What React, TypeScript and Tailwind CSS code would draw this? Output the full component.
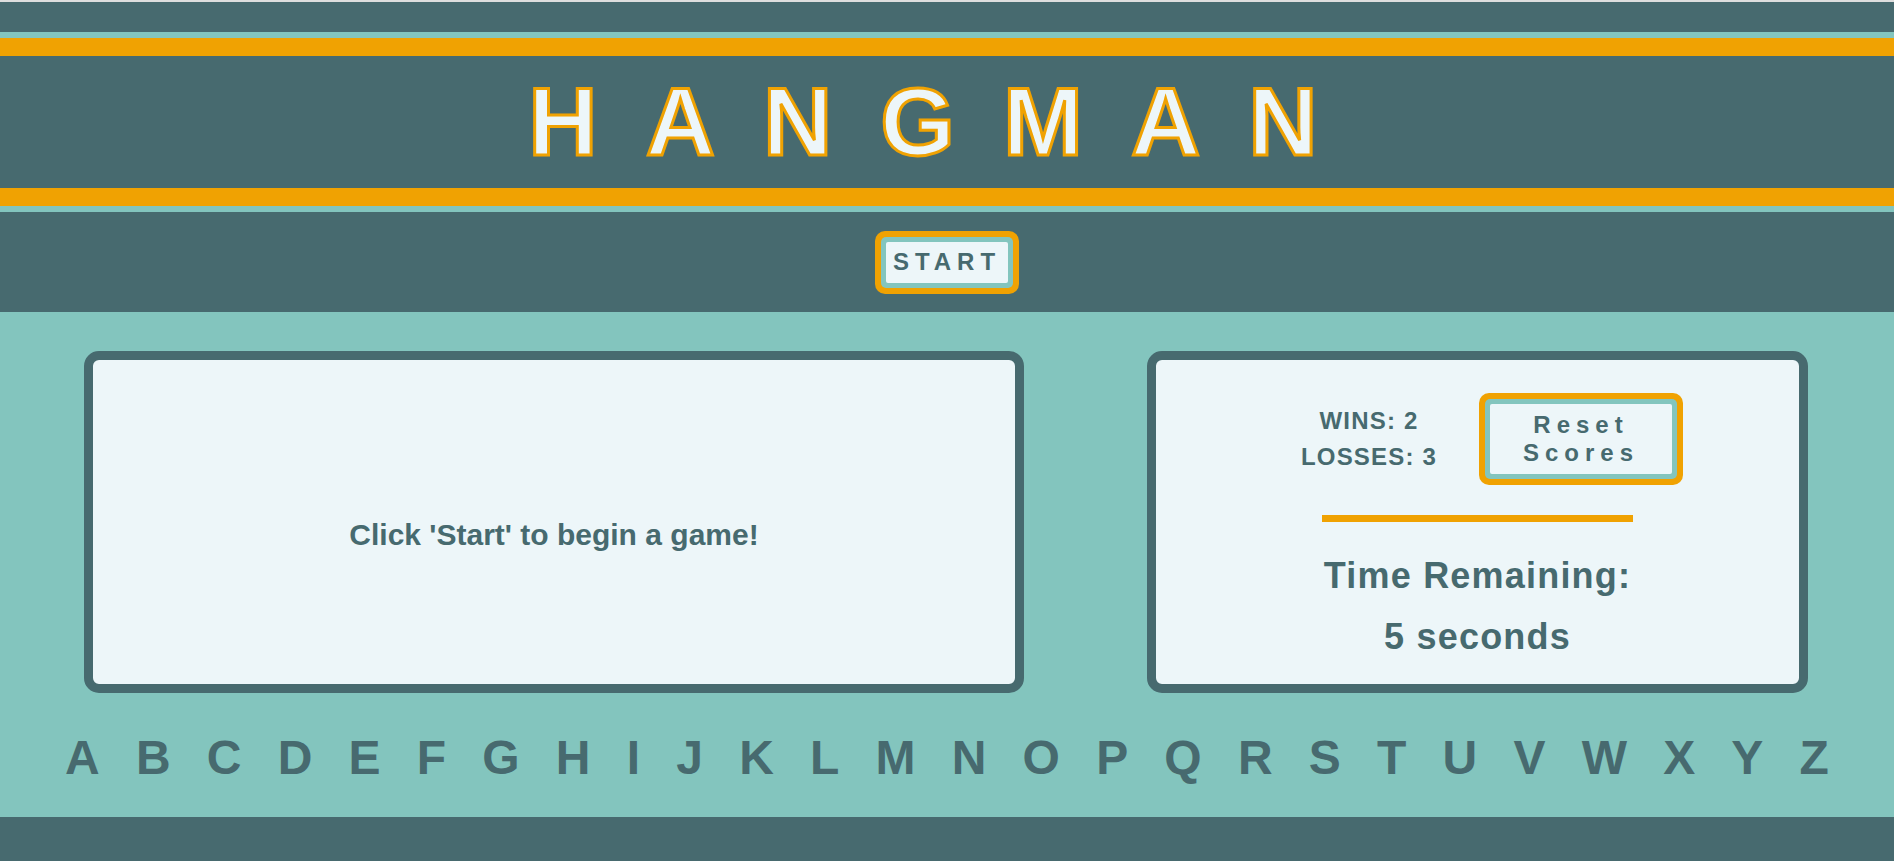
import React from "react";

const ALPHABET = "ABCDEFGHIJKLMNOPQRSTUVWXYZ".split("");

function FramedButton({ children, innerClassName }: { children: React.ReactNode; innerClassName: string }) {
    return (
        <button className="rounded-[10px] bg-[#f0a202] p-[6px]">
            <span className="block rounded-[5px] bg-[#83c5be] p-[5px]">
                <span className={"flex items-center justify-center rounded-[2px] bg-[#edf6f9] text-center text-2xl font-bold leading-[28px] tracking-[6px] text-[#476a6f] " + innerClassName}>
                    {children}
                </span>
            </span>
        </button>
    );
}

function GamePanel() {
    return (
        <section className="flex h-[342px] w-[940px] items-center justify-center rounded-[15px] border-[9px] border-[#476a6f] bg-[#edf6f9] pt-[25px]">
            <p className="text-3xl font-bold">Click 'Start' to begin a game!</p>
        </section>
    );
}

function ScorePanel() {
    return (
        <section className="flex h-[342px] w-[661px] flex-col items-center justify-center rounded-[15px] border-[9px] border-[#476a6f] bg-[#edf6f9] pt-[6px]">
            <div className="mr-[5px] grid w-[424px] grid-cols-2 items-center justify-items-center">
                <div className="text-center text-2xl font-bold leading-9 tracking-[1.2px]">
                    <p>WINS: 2</p>
                    <p>LOSSES: 3</p>
                </div>
                <FramedButton innerClassName="h-[70px] w-[182px]">
                    <span>Reset<br />Scores</span>
                </FramedButton>
            </div>

            <div className="mt-[30px] h-[7px] w-[311px] bg-[#f0a202]" />

            <p className="mt-[33px] text-4xl font-bold leading-[42px] tracking-[1.2px]">Time Remaining:</p>
            <p className="mt-[19px] text-4xl font-bold leading-[42px] tracking-[1.2px]">5 seconds</p>
        </section>
    );
}

export default function App() {
    return (
        <div className="bg-[#476a6f] font-['Liberation_Sans',Arial,sans-serif] text-[#476a6f]">
            <div className="h-[2px] bg-[#dedede]" />

            <header>
                <div className="h-[30px]" />
                <div className="h-[6px] bg-[#83c5be]" />
                <div className="h-[18px] bg-[#f0a202]" />
                <h1 className="py-[18px] text-center text-8xl font-bold leading-none tracking-[48px] text-[#edf6f9] [-webkit-text-stroke:3px_#f0a202]">
                    HANGMAN
                </h1>
                <div className="h-[18px] bg-[#f0a202]" />
                <div className="h-[6px] bg-[#83c5be]" />
            </header>

            <nav className="flex h-[100px] items-center justify-center">
                <FramedButton innerClassName="h-[41px] w-[122px]">START</FramedButton>
            </nav>

            <main className="bg-[#83c5be] pb-[35px] pt-[39px]">
                <div className="flex gap-[123px] pl-[84px]">
                    <GamePanel />
                    <ScorePanel />
                </div>

                <div className="mt-[41px] flex justify-between px-[65px] text-5xl font-bold leading-none">
                    {ALPHABET.map((letter) => (
                        <span key={letter}>{letter}</span>
                    ))}
                </div>
            </main>

            <footer className="h-[44px]" />
        </div>
    );
}
